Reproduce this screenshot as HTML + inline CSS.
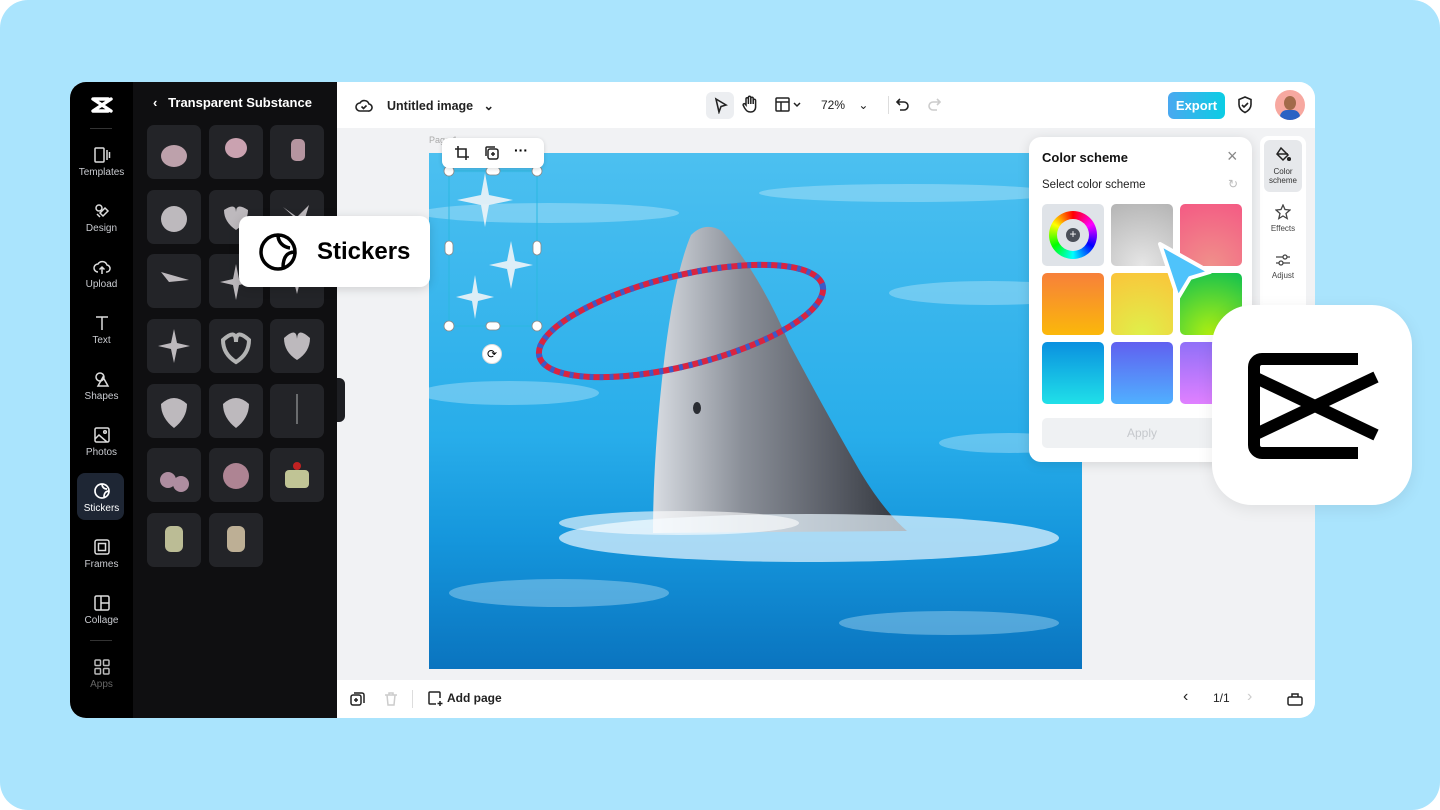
<!DOCTYPE html>
<html><head><meta charset="utf-8"><style>
*{margin:0;padding:0;box-sizing:border-box}
body{width:1440px;height:810px;background:#fff;font-family:"Liberation Sans",sans-serif;overflow:hidden;position:relative}
.bg{position:absolute;inset:0;background:#aae4fd;border-radius:28px}
.app{position:absolute;left:70px;top:82px;width:1245px;height:636px;border-radius:16px;overflow:hidden;background:#f1f2f4}
.side{position:absolute;left:0;top:0;width:63px;height:636px;background:#000}
.si{position:absolute;left:0;width:63px;text-align:center;color:#c9cbd0;font-size:10px}
.si svg{display:block;margin:0 auto 3px}
.panel{position:absolute;left:63px;top:0;width:204px;height:636px;background:#0f0f11}
.tile{position:absolute;width:54px;height:54px;border-radius:7px;background:#232428}
.top{position:absolute;left:267px;top:0;width:978px;height:46px;background:#fff}
.bot{position:absolute;left:267px;top:598px;width:978px;height:38px;background:#fff}
.abs{position:absolute}
</style></head><body>
<div class="bg"></div>
<div class="app">
 <div class="side">
  <svg class="abs" style="left:21px;top:14px" width="22" height="18" viewBox="0 0 22 18"><path d="M3 3h14M3 15h14M2 3l18 12M2 15l18-12" stroke="#fff" stroke-width="3.4" fill="none" stroke-linecap="round"/></svg>
  <div class="abs" style="left:20px;top:46px;width:22px;height:1px;background:#333"></div>
  <div class="si" style="top:64px"><svg width="18" height="18" viewBox="0 0 18 18" fill="none" stroke="#ddd" stroke-width="1.5"><rect x="2" y="2" width="9" height="14" rx="1"/><path d="M14 4v10M16.5 6v6"/></svg>Templates</div>
  <div class="si" style="top:120px"><svg width="18" height="18" viewBox="0 0 18 18" fill="none" stroke="#ddd" stroke-width="1.5"><circle cx="6" cy="6" r="3"/><path d="M10 14l5-5-3-3-5 5zM4 12l3 3"/></svg>Design</div>
  <div class="si" style="top:176px"><svg width="18" height="18" viewBox="0 0 18 18" fill="none" stroke="#ddd" stroke-width="1.5"><path d="M5 14a4 4 0 0 1 0-8 5 5 0 0 1 9 1 3.5 3.5 0 0 1-1 7M9 16V9M6.5 11.5L9 9l2.5 2.5"/></svg>Upload</div>
  <div class="si" style="top:232px"><svg width="18" height="18" viewBox="0 0 18 18" fill="none" stroke="#ddd" stroke-width="1.5"><path d="M3 3h12M9 3v13"/></svg>Text</div>
  <div class="si" style="top:288px"><svg width="18" height="18" viewBox="0 0 18 18" fill="none" stroke="#ddd" stroke-width="1.5"><circle cx="7" cy="7" r="4"/><path d="M10 7l5 9H5z"/></svg>Shapes</div>
  <div class="si" style="top:344px"><svg width="18" height="18" viewBox="0 0 18 18" fill="none" stroke="#ddd" stroke-width="1.5"><rect x="2" y="2" width="14" height="14" rx="1.5"/><path d="M2 13l4-4 8 7"/><circle cx="12" cy="6" r="1.3"/></svg>Photos</div>
  <div class="abs" style="left:7px;top:391px;width:47px;height:47px;border-radius:8px;background:#1e2634"></div>
  <div class="si" style="top:400px;color:#fff"><svg width="18" height="18" viewBox="0 0 18 18" fill="none" stroke="#fff" stroke-width="1.7"><path d="M16 9A7 7 0 1 1 9 2a7 7 0 0 1 7 7c-3 0-5 2-5 6M9 2c0 3 2 5 5 5"/></svg>Stickers</div>
  <div class="si" style="top:456px"><svg width="18" height="18" viewBox="0 0 18 18" fill="none" stroke="#ddd" stroke-width="1.5"><rect x="2" y="2" width="14" height="14" rx="2"/><rect x="5.5" y="5.5" width="7" height="7"/></svg>Frames</div>
  <div class="si" style="top:512px"><svg width="18" height="18" viewBox="0 0 18 18" fill="none" stroke="#ddd" stroke-width="1.5"><rect x="2" y="2" width="14" height="14" rx="1.5"/><path d="M8 2v14M8 9h8"/></svg>Collage</div>
  <div class="abs" style="left:20px;top:558px;width:22px;height:1px;background:#333"></div>
  <div class="si" style="top:576px;color:#666"><svg width="18" height="18" viewBox="0 0 18 18" fill="none" stroke="#bbb" stroke-width="1.5"><rect x="2" y="2" width="5.5" height="5.5" rx="1"/><rect x="10.5" y="2" width="5.5" height="5.5" rx="1"/><rect x="2" y="10.5" width="5.5" height="5.5" rx="1"/><rect x="10.5" y="10.5" width="5.5" height="5.5" rx="1"/></svg>Apps</div>
 </div>
 <div class="panel">
  <div class="abs" style="left:20px;top:13px;color:#fff;font-size:13px;font-weight:bold">&lsaquo;&nbsp;&nbsp; Transparent Substance</div>
  <div class="tile" style="left:14px;top:43px"></div><div class="tile" style="left:76px;top:43px"></div><div class="tile" style="left:137px;top:43px"></div>
  <div class="tile" style="left:14px;top:108px"></div><div class="tile" style="left:76px;top:108px"></div><div class="tile" style="left:137px;top:108px"></div>
  <div class="tile" style="left:14px;top:172px"></div><div class="tile" style="left:76px;top:172px"></div><div class="tile" style="left:137px;top:172px"></div>
  <div class="tile" style="left:14px;top:237px"></div><div class="tile" style="left:76px;top:237px"></div><div class="tile" style="left:137px;top:237px"></div>
  <div class="tile" style="left:14px;top:302px"></div><div class="tile" style="left:76px;top:302px"></div><div class="tile" style="left:137px;top:302px"></div>
  <div class="tile" style="left:14px;top:366px"></div><div class="tile" style="left:76px;top:366px"></div><div class="tile" style="left:137px;top:366px"></div>
  <div class="tile" style="left:14px;top:431px"></div><div class="tile" style="left:76px;top:431px"></div>
  <svg class="abs" style="left:0;top:0" width="204" height="500">
   <g fill="#d9d4d8" opacity=".85">
    <ellipse cx="41" cy="74" rx="13" ry="11" fill="#d8b7c3"/><ellipse cx="103" cy="66" rx="11" ry="10" fill="#e8b8c8"/><rect x="158" y="57" width="14" height="22" rx="5" fill="#cfa9b5"/>
    <circle cx="41" cy="137" r="13"/><path d="M91 128q12-8 12 2q0-10 12-2q0 12-12 20q-12-8-12-20z"/><path d="M150 125l14 10 12-12-6 20z"/>
    <path d="M28 190l28 8-20 2z"/><path d="M103 182l3 15 13 3-13 3-3 15-3-15-13-3 13-3z"/><path d="M164 192l2 8 8 2-8 2-2 8-2-8-8-2 8-2z"/>
    <path d="M41 247l3 14 13 3-13 3-3 14-3-14-13-3 13-3z"/><path d="M90 258q13-12 13 2q0-14 13-2q0 14-13 22q-13-8-13-22z" fill="none" stroke="#ccc" stroke-width="4"/><path d="M151 256q13-12 13 2q0-14 13-2q0 14-13 22q-13-8-13-22z"/>
    <path d="M28 322q13-12 26 0q0 14-13 24q-13-10-13-24z"/><path d="M90 322q13-12 26 0q0 14-13 24q-13-10-13-24z"/><path d="M164 312v30" stroke="#ccc"/>
    <circle cx="35" cy="398" r="8" fill="#c7a0b6"/><circle cx="48" cy="402" r="8" fill="#c7a0b6"/><circle cx="103" cy="394" r="13" fill="#c795a6"/><rect x="152" y="388" width="24" height="18" rx="4" fill="#dce0a8"/><circle cx="164" cy="384" r="4" fill="#d22"/>
    <rect x="32" y="444" width="18" height="26" rx="6" fill="#d6d7a8"/><rect x="94" y="444" width="18" height="26" rx="6" fill="#d8c8a8"/>
   </g>
  </svg>
 </div>
 <div class="abs" style="left:267px;top:296px;width:8px;height:44px;border-radius:0 6px 6px 0;background:#1d1e22"></div>
 <div class="top">
  <svg class="abs" style="left:18px;top:15px" width="18" height="16" viewBox="0 0 18 16" fill="none" stroke="#222" stroke-width="1.6"><path d="M5 14a4 4 0 0 1 0-8 5 5 0 0 1 9 1 3.5 3.5 0 0 1-1 7z"/><path d="M6.5 9.5l2 2 3-3"/></svg>
  <div class="abs" style="left:50px;top:16px;font-size:12.5px;color:#222;font-weight:600">Untitled image &nbsp;&nbsp;&#8964;</div>
  <div class="abs" style="left:369px;top:10px;width:28px;height:27px;border-radius:6px;background:#eceef1"></div>
  <svg class="abs" style="left:376px;top:15px" width="16" height="17" viewBox="0 0 16 17" fill="none" stroke="#222" stroke-width="1.6"><path d="M3 2l10 6-5 1.5L6 15z"/></svg>
  <svg class="abs" style="left:404px;top:13px" width="18" height="19" viewBox="0 0 18 19" fill="none" stroke="#222" stroke-width="1.5"><path d="M5 10V4a1.2 1.2 0 0 1 2.4 0v5V2.5a1.2 1.2 0 0 1 2.4 0V9V3.5a1.2 1.2 0 0 1 2.4 0V9V5.5a1.2 1.2 0 0 1 2.4 0V12c0 3-2 5-5 5s-4-1-6-4l-1.5-3a1.2 1.2 0 0 1 2-1z"/></svg>
  <svg class="abs" style="left:438px;top:15px" width="30" height="16" fill="none" stroke="#222" stroke-width="1.5"><rect x="1" y="1" width="13" height="13" rx="1"/><path d="M1 5h13M6 5v9M19 6l3 3 3-3"/></svg>
  <div class="abs" style="left:484px;top:16px;font-size:12px;color:#222">72% &nbsp;&nbsp;&nbsp;&#8964;</div>
  <div class="abs" style="left:551px;top:14px;width:1px;height:18px;background:#ddd"></div>
  <svg class="abs" style="left:558px;top:14px" width="16" height="16" fill="none" stroke="#222" stroke-width="1.6"><path d="M5 3L2 6l3 3M2 6h7a4 4 0 0 1 0 8H5"/></svg>
  <svg class="abs" style="left:589px;top:14px" width="16" height="16" fill="none" stroke="#ccc" stroke-width="1.6"><path d="M11 3l3 3-3 3M14 6H7a4 4 0 0 0 0 8h4"/></svg>
  <div class="abs" style="left:831px;top:10px;width:57px;height:27px;border-radius:6px;background:linear-gradient(90deg,#4aa8f0,#0bcde4);color:#fff;font-size:13px;font-weight:bold;text-align:center;line-height:27px">Export</div>
  <svg class="abs" style="left:900px;top:14px" width="16" height="18" fill="none" stroke="#222" stroke-width="1.6"><path d="M8 1l6 2.5v5c0 4-3 6.5-6 8-3-1.5-6-4-6-8v-5z"/><path d="M5 9l2 2 4-4"/></svg>
  <div class="abs" style="left:938px;top:8px;width:30px;height:30px;border-radius:50%;background:#f7a8a0;overflow:hidden"><div style="position:absolute;left:9px;top:6px;width:12px;height:14px;border-radius:50%;background:#a36a4a"></div><div style="position:absolute;left:5px;top:20px;width:20px;height:14px;border-radius:8px;background:#2a62c4"></div></div>
 </div>
 <div class="abs" style="left:359px;top:53px;font-size:9px;color:#aaa">Page 1</div>
 <!-- image -->
 <svg class="abs" style="left:359px;top:71px" width="653" height="516" viewBox="0 0 653 516">
  <defs>
   <linearGradient id="w" x1="0" y1="0" x2="0" y2="1"><stop offset="0" stop-color="#4cc0f0"/><stop offset=".55" stop-color="#28adea"/><stop offset=".75" stop-color="#1596dc"/><stop offset="1" stop-color="#0a74bf"/></linearGradient>
   <linearGradient id="d" x1="0" y1="0" x2="1" y2="0"><stop offset="0" stop-color="#d8dce2"/><stop offset=".35" stop-color="#8a8f98"/><stop offset=".7" stop-color="#5a5e67"/><stop offset="1" stop-color="#30343b"/></linearGradient>
  </defs>
  <rect width="653" height="516" fill="url(#w)"/>
  <g fill="#d4f0fc" opacity=".35"><ellipse cx="120" cy="60" rx="130" ry="10"/><ellipse cx="480" cy="40" rx="150" ry="9"/><ellipse cx="560" cy="140" rx="100" ry="12"/><ellipse cx="80" cy="240" rx="90" ry="12"/><ellipse cx="580" cy="290" rx="70" ry="10"/><ellipse cx="130" cy="440" rx="110" ry="14"/><ellipse cx="520" cy="470" rx="110" ry="12"/></g>
  <path d="M262 82Q276 68 293 78Q330 120 360 190Q400 265 432 320Q455 358 478 378L224 380Q224 300 236 200Q246 120 262 82z" fill="url(#d)"/>
  <ellipse cx="268" cy="255" rx="4" ry="6" fill="#2a2d33"/>
  <ellipse cx="380" cy="385" rx="250" ry="24" fill="#eaf7ff" opacity=".7"/>
  <ellipse cx="250" cy="370" rx="120" ry="12" fill="#fff" opacity=".6"/>
  <ellipse cx="252" cy="168" rx="146" ry="45" transform="rotate(-14 252 168)" fill="none" stroke="#d9243f" stroke-width="6"/>
  <ellipse cx="252" cy="168" rx="146" ry="45" transform="rotate(-14 252 168)" fill="none" stroke="#3b5bc8" stroke-width="6" stroke-dasharray="4 6"/>
  <g fill="#eef4f8" opacity=".9"><path d="M56 20l4 22 24 5-24 5-4 22-4-22-24-5 24-5z"/><path d="M82 88l4 20 18 4-18 4-4 20-4-20-18-4 18-4z"/><path d="M46 122l3 18 16 4-16 4-3 18-3-18-16-4 16-4z"/></g>
  <rect x="20" y="18" width="88" height="155" fill="none" stroke="#2bb8e0" stroke-width="1"/>
  <g fill="#fff" stroke="#888" stroke-width=".8"><circle cx="20" cy="18" r="5"/><circle cx="108" cy="18" r="5"/><circle cx="20" cy="173" r="5"/><circle cx="108" cy="173" r="5"/><rect x="57" y="14" width="14" height="8" rx="4"/><rect x="57" y="169" width="14" height="8" rx="4"/><rect x="16" y="88" width="8" height="14" rx="4"/><rect x="104" y="88" width="8" height="14" rx="4"/></g>
 </svg>
 <div class="abs" style="left:412px;top:262px;width:20px;height:20px;border-radius:50%;background:#fff;border:1px solid #ddd;text-align:center;font-size:12px;line-height:18px">⟳</div>
 <div class="abs" style="left:372px;top:56px;width:102px;height:30px;border-radius:7px;background:#fff;box-shadow:0 1px 4px rgba(0,0,0,.15)">
  <svg class="abs" style="left:12px;top:7px" width="16" height="16" fill="none" stroke="#222" stroke-width="1.6"><path d="M4 1v11h11M1 4h11v11"/></svg>
  <svg class="abs" style="left:42px;top:7px" width="16" height="16" fill="none" stroke="#222" stroke-width="1.5"><rect x="4" y="4" width="10" height="10" rx="2"/><path d="M2 11V3a1 1 0 0 1 1-1h8M9 7v4M7 9h4"/></svg>
  <div class="abs" style="left:72px;top:4px;font-size:14px;font-weight:bold">···</div>
 </div>
 <div class="bot">
  <svg class="abs" style="left:13px;top:11px" width="16" height="16" fill="none" stroke="#222" stroke-width="1.5"><rect x="1" y="4" width="10" height="10" rx="2"/><path d="M4 2h8a2 2 0 0 1 2 2v8M6 7v4M4 9h4"/></svg>
  <svg class="abs" style="left:47px;top:11px" width="14" height="16" fill="none" stroke="#ccc" stroke-width="1.5"><path d="M1 4h12M5 4V2h4v2M3 4l1 10h6l1-10"/></svg>
  <div class="abs" style="left:75px;top:10px;width:1px;height:18px;background:#ddd"></div>
  <svg class="abs" style="left:90px;top:10px" width="16" height="16" fill="none" stroke="#222" stroke-width="1.5"><path d="M13 8V3a1 1 0 0 0-1-1H3a1 1 0 0 0-1 1v10a1 1 0 0 0 1 1h6M13 11v5M10.5 13.5h5"/></svg>
  <div class="abs" style="left:110px;top:11px;font-size:12px;font-weight:bold;color:#222">Add page</div>
  <div class="abs" style="left:846px;top:8px;font-size:16px;color:#222">&lsaquo;</div>
  <div class="abs" style="left:876px;top:11px;font-size:12px;color:#222">1/1</div>
  <div class="abs" style="left:910px;top:8px;font-size:16px;color:#ccc">&rsaquo;</div>
  <svg class="abs" style="left:950px;top:11px" width="16" height="16" fill="none" stroke="#222" stroke-width="1.5"><rect x="1" y="6" width="14" height="8" rx="1.5"/><path d="M5 6V3h6v3"/></svg>
 </div>
 <div class="abs" style="left:1190px;top:54px;width:46px;height:300px;border-radius:8px;background:#fff">
  <div class="abs" style="left:4px;top:4px;width:38px;height:52px;border-radius:6px;background:#e6e8eb"></div>
  <svg class="abs" style="left:15px;top:10px" width="16" height="16" fill="none" stroke="#222" stroke-width="1.5"><path d="M6 2l7 7-5 5-6-6z"/><path d="M2 8h11" /><circle cx="14" cy="13" r="1.3" fill="#222"/></svg>
  <div class="abs" style="left:0;top:31px;width:46px;text-align:center;font-size:8px;color:#333;line-height:9px">Color<br>scheme</div>
  <svg class="abs" style="left:15px;top:68px" width="16" height="16" fill="none" stroke="#444" stroke-width="1.3"><path d="M8 1l2 4.5 5 .5-4 3.5 1.2 5L8 12l-4.2 2.5L5 9.5 1 6l5-.5z"/></svg>
  <div class="abs" style="left:0;top:88px;width:46px;text-align:center;font-size:8px;color:#444">Effects</div>
  <svg class="abs" style="left:15px;top:116px" width="16" height="16" fill="none" stroke="#444" stroke-width="1.3"><path d="M1 5h14M1 11h14"/><circle cx="10" cy="5" r="2" fill="#fff"/><circle cx="6" cy="11" r="2" fill="#fff"/></svg>
  <div class="abs" style="left:0;top:135px;width:46px;text-align:center;font-size:8px;color:#444">Adjust</div>
 </div>
</div>
<!-- color scheme panel -->
<div class="abs" style="left:1029px;top:137px;width:223px;height:325px;border-radius:12px;background:#fff;box-shadow:0 2px 12px rgba(0,0,0,.12)">
 <div class="abs" style="left:13px;top:13px;font-size:13px;font-weight:bold;color:#111">Color scheme</div>
 <div class="abs" style="left:198px;top:9px;font-size:18px;color:#888">×</div>
 <div class="abs" style="left:13px;top:42px;font-size:11.5px;color:#222">Select color scheme</div>
 <div class="abs" style="left:199px;top:40px;font-size:12px;color:#bbb">↻</div>
 <div class="abs" style="left:13px;top:67px;width:62px;height:62px;border-radius:5px;background:#dfe3e8"></div>
 <div class="abs" style="left:20px;top:74px;width:48px;height:48px;border-radius:50%;background:conic-gradient(red,#f0f,#00f,#0ff,#0f0,#ff0,red)"><div style="position:absolute;left:8px;top:8px;width:32px;height:32px;border-radius:50%;background:#dfe3e8"></div><div style="position:absolute;left:17px;top:17px;width:14px;height:14px;border-radius:50%;background:#4a4f58;color:#fff;font-size:12px;line-height:13px;text-align:center">+</div></div>
 <div class="abs" style="left:82px;top:67px;width:62px;height:62px;border-radius:5px;background:radial-gradient(circle at 50% 100%,#e6e6e6,#b4b4b4)"></div>
 <div class="abs" style="left:151px;top:67px;width:62px;height:62px;border-radius:5px;background:radial-gradient(circle at 50% 100%,#f0908a,#f45a84)"></div>
 <div class="abs" style="left:13px;top:136px;width:62px;height:62px;border-radius:5px;background:linear-gradient(#f7803a,#fbb80a)"></div>
 <div class="abs" style="left:82px;top:136px;width:62px;height:62px;border-radius:5px;background:radial-gradient(circle at 50% 100%,#dff04a,#fbc43a)"></div>
 <div class="abs" style="left:151px;top:136px;width:62px;height:62px;border-radius:5px;background:radial-gradient(circle at 50% 100%,#b2f010,#10c050)"></div>
 <div class="abs" style="left:13px;top:205px;width:62px;height:62px;border-radius:5px;background:linear-gradient(#0a90e0,#20e0e8)"></div>
 <div class="abs" style="left:82px;top:205px;width:62px;height:62px;border-radius:5px;background:linear-gradient(#6060f0,#50b0ff)"></div>
 <div class="abs" style="left:151px;top:205px;width:62px;height:62px;border-radius:5px;background:linear-gradient(#9070f8,#e080ff)"></div>
 <div class="abs" style="left:13px;top:281px;width:200px;height:30px;border-radius:5px;background:#eff1f3;color:#c5c8cc;text-align:center;line-height:30px;font-size:12px">Apply</div>
</div>
<svg class="abs" style="left:1152px;top:238px" width="66" height="66"><path d="M8 6l50 28-20 6-12 20z" fill="#4fc3fb" stroke="#fff" stroke-width="4" stroke-linejoin="round"/></svg>
<!-- logo tile -->
<div class="abs" style="left:1212px;top:305px;width:200px;height:200px;border-radius:40px;background:#fff;box-shadow:0 4px 16px rgba(0,0,0,.08)">
 <svg class="abs" style="left:36px;top:48px" width="136" height="106" viewBox="0 0 136 106"><g fill="none" stroke="#000" stroke-width="12"><path d="M110 6H14a8 8 0 0 0-8 8v78a8 8 0 0 0 8 8h96"/><path d="M6 24l122 58M6 82l122-58"/></g></svg>
</div>
<!-- stickers popup -->
<div class="abs" style="left:239px;top:216px;width:191px;height:71px;border-radius:10px;background:#fff;box-shadow:0 2px 10px rgba(0,0,0,.15)">
 <svg class="abs" style="left:18px;top:15px" width="42" height="42" viewBox="0 0 42 42" fill="none" stroke="#000" stroke-width="3.5"><path d="M38 21A17 17 0 1 1 21 4a17 17 0 0 1 17 17c-8 0-12 5-12 16M21 4c0 7 5 12 12 13"/></svg>
 <div class="abs" style="left:78px;top:22px;font-size:24px;font-weight:bold;color:#000">Stickers</div>
</div>
</body></html>
